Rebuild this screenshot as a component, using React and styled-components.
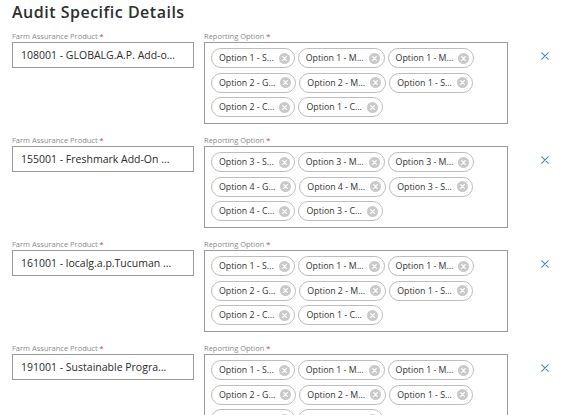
import React from "react";
import styled, { createGlobalStyle } from "styled-components";

const GlobalStyle = createGlobalStyle`
  body {
    margin: 0;
    background: #ffffff;
    font-family: "Open Sans", "Noto Sans", sans-serif;
    color: #333;
  }
`;

const audits = [
  {
    product: "108001 - GLOBALG.A.P. Add-o...",
    options: [
      "Option 1 - S...",
      "Option 1 - M...",
      "Option 1 - M...",
      "Option 2 - G...",
      "Option 2 - M...",
      "Option 1 - S...",
      "Option 2 - C...",
      "Option 1 - C...",
    ],
  },
  {
    product: "155001 - Freshmark Add-On ...",
    options: [
      "Option 3 - S...",
      "Option 3 - M...",
      "Option 3 - M...",
      "Option 4 - G...",
      "Option 4 - M...",
      "Option 3 - S...",
      "Option 4 - C...",
      "Option 3 - C...",
    ],
  },
  {
    product: "161001 - localg.a.p.Tucuman ...",
    options: [
      "Option 1 - S...",
      "Option 1 - M...",
      "Option 1 - M...",
      "Option 2 - G...",
      "Option 2 - M...",
      "Option 1 - S...",
      "Option 2 - C...",
      "Option 1 - C...",
    ],
  },
  {
    product: "191001 - Sustainable Progra...",
    options: [
      "Option 1 - S...",
      "Option 1 - M...",
      "Option 1 - M...",
      "Option 2 - G...",
      "Option 2 - M...",
      "Option 1 - S...",
      "Option 2 - C...",
      "Option 1 - C...",
    ],
  },
];

const ChipClose = () => (
  <svg width="11" height="11" viewBox="0 0 12 12">
    <circle cx="6" cy="6" r="6" fill="#c9c9c9" />
    <path d="M4 4 L8 8 M8 4 L4 8" stroke="#fff" strokeWidth="1.4" strokeLinecap="round" />
  </svg>
);

const RemoveIcon = () => (
  <svg width="8" height="8" viewBox="0 0 10 10">
    <path d="M1 1 L9 9 M9 1 L1 9" stroke="#3f86d3" strokeWidth="1.4" strokeLinecap="round" />
  </svg>
);

const App = () => {
  return (
    <>
      <GlobalStyle />
      <Page>
        <Title>Audit Specific Details</Title>
        {audits.map((audit, i) => (
          <AuditRow key={i}>
            <Field>
              <Label>
                Farm Assurance Product <Star>*</Star>
              </Label>
              <Input>{audit.product}</Input>
            </Field>
            <Field>
              <Label>
                Reporting Option <Star>*</Star>
              </Label>
              <ChipBox>
                {audit.options.map((opt, j) => (
                  <Chip key={j}>
                    <span>{opt}</span>
                    <ChipClose />
                  </Chip>
                ))}
              </ChipBox>
            </Field>
            <RemoveButton>
              <RemoveIcon />
            </RemoveButton>
          </AuditRow>
        ))}
      </Page>
    </>
  );
};

const Page = styled.div`
  padding: 2px 12px 0 12px;
  height: 415px;
  overflow: hidden;
  box-sizing: border-box;
`;

const Title = styled.h2`
  margin: 0 0 10px 0;
  font-size: 16px;
  font-weight: 600;
  letter-spacing: 0.5px;
  color: #2e2e2e;
  line-height: 20px;
`;

const AuditRow = styled.div`
  display: flex;
  align-items: flex-start;
  gap: 10px;
  margin-bottom: 12px;
`;

const Field = styled.div`
  display: flex;
  flex-direction: column;
  gap: 1px;
`;

const Label = styled.div`
  font-size: 7.5px;
  line-height: 9px;
  color: #8a8a8a;
`;

const Star = styled.span`
  color: #d9342b;
`;

const Input = styled.div`
  width: 182px;
  height: 26px;
  box-sizing: border-box;
  border: 1px solid #9a9a9a;
  padding: 0 8px;
  display: flex;
  align-items: center;
  font-size: 10.5px;
  color: #2a2a2a;
  white-space: nowrap;
`;

const ChipBox = styled.div`
  width: 304px;
  height: 82px;
  box-sizing: border-box;
  border: 1px solid #9a9a9a;
  padding: 5px 6px;
  display: flex;
  flex-wrap: wrap;
  align-content: flex-start;
  gap: 4.5px 3px;
`;

const Chip = styled.div`
  height: 20px;
  box-sizing: border-box;
  border: 1px solid #bdbdbd;
  border-radius: 10px;
  padding: 0 4px 0 7px;
  display: flex;
  align-items: center;
  gap: 5px;
  font-size: 8.8px;
  color: #333;
  white-space: nowrap;
`;

const RemoveButton = styled.div`
  margin: 18px 0 0 21px;
  width: 12px;
  height: 12px;
  display: flex;
  align-items: center;
  justify-content: center;
`;

export default App;
